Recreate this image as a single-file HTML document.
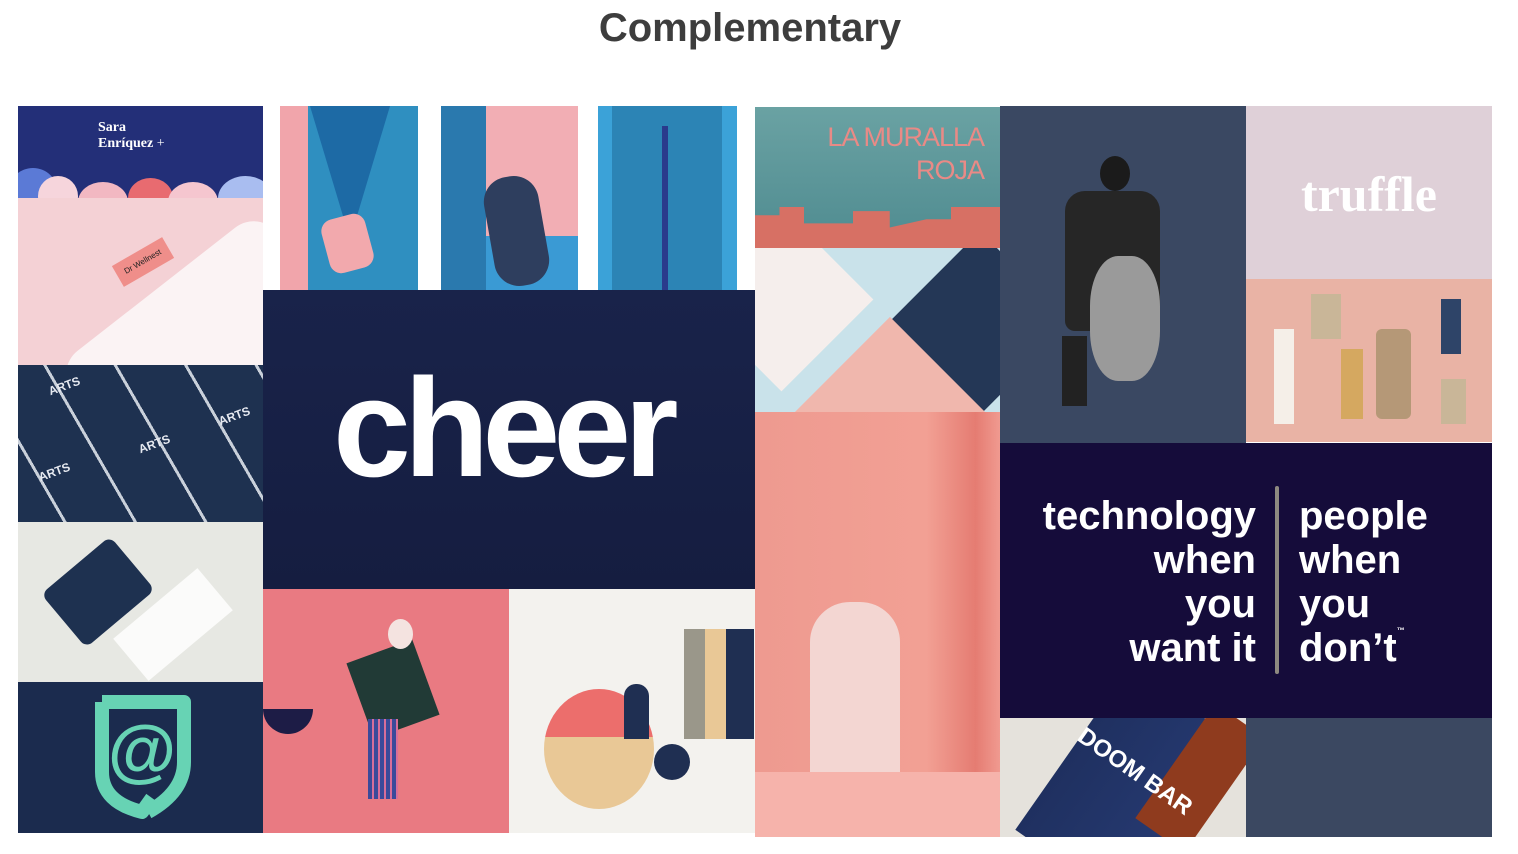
<!DOCTYPE html>
<html><head><meta charset="utf-8"><style>
*{margin:0;padding:0;box-sizing:border-box}
html,body{width:1518px;height:854px;overflow:hidden}
body{background:#fff;position:relative;font-family:"Liberation Sans",sans-serif}
.b{position:absolute;overflow:hidden}
h1{position:absolute;left:0;width:1500px;top:6px;text-align:center;font-size:40px;font-weight:bold;color:#3d3d3d;letter-spacing:0px}
.tech{position:absolute;color:#fff;font-size:40px;font-weight:bold;line-height:44px;letter-spacing:0px}
</style></head><body>
<h1>Complementary</h1>

<!-- column 1 -->
<div class="b" style="left:18px;top:106px;width:245px;height:92px;background:#232f78">
  <div style="position:absolute;left:80px;top:14px;color:#fff;font-family:'Liberation Serif',serif;font-weight:bold;font-size:14px;line-height:16px">Sara<br>Enríquez <span style="font-weight:normal">+</span></div>
  <div style="position:absolute;left:-10px;top:62px;width:50px;height:50px;border-radius:50%;background:#5b7ad6"></div>
  <div style="position:absolute;left:20px;top:70px;width:40px;height:40px;border-radius:50%;background:#f6d5dc"></div>
  <div style="position:absolute;left:60px;top:76px;width:50px;height:40px;border-radius:50%;background:#f2b8c2"></div>
  <div style="position:absolute;left:110px;top:72px;width:45px;height:40px;border-radius:50%;background:#e86b70"></div>
  <div style="position:absolute;left:150px;top:76px;width:50px;height:40px;border-radius:50%;background:#f5c6cf"></div>
  <div style="position:absolute;left:200px;top:70px;width:55px;height:45px;border-radius:50%;background:#a9bdf0"></div>
</div>
<div class="b" style="left:18px;top:198px;width:245px;height:167px;background:#f4d1d5">
  <div style="position:absolute;width:260px;height:200px;background:#fbf3f4;transform:rotate(-38deg);border-radius:30px;left:70px;top:70px"></div>
  <div style="position:absolute;left:96px;top:52px;width:58px;height:24px;background:#ef8e8a;transform:rotate(-30deg);font-size:8px;color:#222;text-align:center;line-height:24px">Dr Wellnest</div>
</div>
<div class="b" style="left:18px;top:365px;width:245px;height:157px;background:#1e3150">
  <div style="position:absolute;left:-20px;top:0;width:300px;height:160px;background:repeating-linear-gradient(60deg,transparent 0 58px,#c9d0da 58px 61px)"></div>
  <div style="position:absolute;left:20px;top:100px;color:#e6e9f0;font-weight:bold;font-size:12px;transform:rotate(-20deg)">ARTS</div>
  <div style="position:absolute;left:120px;top:72px;color:#e6e9f0;font-weight:bold;font-size:12px;transform:rotate(-20deg)">ARTS</div>
  <div style="position:absolute;left:200px;top:44px;color:#e6e9f0;font-weight:bold;font-size:12px;transform:rotate(-20deg)">ARTS</div>
  <div style="position:absolute;left:30px;top:14px;color:#e6e9f0;font-weight:bold;font-size:12px;transform:rotate(-20deg)">ARTS</div>
</div>
<div class="b" style="left:18px;top:522px;width:245px;height:160px;background:#e7e8e3">
  <div style="position:absolute;left:35px;top:35px;width:90px;height:70px;background:#1e3150;transform:rotate(-40deg);border-radius:8px"></div>
  <div style="position:absolute;left:100px;top:75px;width:110px;height:55px;background:#fbfbfa;transform:rotate(-40deg)"></div>
</div>
<div class="b" style="left:18px;top:682px;width:245px;height:151px;background:#1b2b4e">
  <svg width="245" height="151" style="position:absolute;left:0;top:0"><path d="M84 20 h82 v60 q0 30 -36 50 M84 20 v70 q0 30 40 40 l10 -14" fill="none" stroke="#67d3b4" stroke-width="14" stroke-linejoin="round"/><text x="124" y="92" text-anchor="middle" font-family="Liberation Sans" font-weight="bold" font-size="70" fill="#67d3b4">@</text></svg>
</div>

<!-- suits -->
<div class="b" style="left:280px;top:106px;width:138px;height:184px;background:#2f8fc0">
  <div style="position:absolute;left:0;top:0;width:28px;height:184px;background:#f1a5ab"></div>
  <div style="position:absolute;left:30px;top:0;width:80px;height:120px;background:#1d6aa5;clip-path:polygon(0 0,100% 0,55% 100%,45% 100%)"></div>
  <div style="position:absolute;left:45px;top:110px;width:45px;height:55px;background:#f2a9ad;border-radius:12px;transform:rotate(-15deg)"></div>
</div>
<div class="b" style="left:441px;top:106px;width:137px;height:184px;background:#f2aeb4">
  <div style="position:absolute;left:0;top:130px;width:137px;height:54px;background:#3a9ad4"></div>
  <div style="position:absolute;left:0;top:0;width:45px;height:184px;background:#2a79ae"></div>
  <div style="position:absolute;left:48px;top:70px;width:55px;height:110px;background:#2e3e5e;border-radius:25px;transform:rotate(-10deg)"></div>
</div>
<div class="b" style="left:598px;top:106px;width:139px;height:184px;background:#3ba2d8">
  <div style="position:absolute;left:14px;top:0;width:110px;height:184px;background:#2c84b5"></div>
  <div style="position:absolute;left:64px;top:20px;width:6px;height:164px;background:#2a3a8c"></div>
</div>

<!-- cheer -->
<div class="b" style="left:263px;top:290px;width:492px;height:299px;background:linear-gradient(#19234a,#151d40)">
  <div style="position:absolute;left:70px;top:58px;color:#fff;font-weight:bold;font-size:140px;letter-spacing:-7px;line-height:160px">cheer</div>
</div>

<!-- illustrations -->
<div class="b" style="left:263px;top:589px;width:246px;height:244px;background:#e97a82">
  <div style="position:absolute;left:95px;top:60px;width:70px;height:80px;background:#213a36;transform:rotate(-20deg)"></div>
  <div style="position:absolute;left:105px;top:130px;width:30px;height:80px;background:repeating-linear-gradient(90deg,#3b4a9a 0 4px,#d86e9a 4px 6px)"></div>
  <div style="position:absolute;left:125px;top:30px;width:25px;height:30px;background:#f4e3e0;border-radius:50%"></div>
  <div style="position:absolute;left:0;top:120px;width:50px;height:25px;border-radius:0 0 30px 30px;background:#1d1c46"></div>
</div>
<div class="b" style="left:509px;top:589px;width:246px;height:244px;background:#f3f2ee">
  <div style="position:absolute;left:35px;top:100px;width:110px;height:120px;border-radius:50%;background:linear-gradient(#ec6e6c 0 40%,#e9c896 40%)"></div>
  <div style="position:absolute;left:145px;top:155px;width:36px;height:36px;border-radius:50%;background:#1f2f52"></div>
  <div style="position:absolute;left:175px;top:40px;width:70px;height:110px;background:linear-gradient(90deg,#9a978a 0 30%,#e9c896 30% 60%,#1f2f52 60%)"></div>
  <div style="position:absolute;left:115px;top:95px;width:25px;height:55px;background:#1f2f52;border-radius:12px 12px 0 0"></div>
</div>

<!-- col 3 -->
<div class="b" style="left:755px;top:107px;width:245px;height:141px;background:linear-gradient(#6aa2a3,#4f8b90)">
  <div style="position:absolute;right:16px;top:14px;color:#e98a86;font-size:27px;line-height:33px;text-align:right;letter-spacing:-1px">LA MURALLA<br>ROJA</div>
  <div style="position:absolute;left:0;top:100px;width:245px;height:41px;background:#d77064;clip-path:polygon(0 20%,10% 20%,10% 0,20% 0,20% 40%,40% 40%,40% 10%,55% 10%,55% 50%,70% 30%,80% 30%,80% 0,100% 0,100% 100%,0 100%)"></div>
</div>
<div class="b" style="left:755px;top:248px;width:245px;height:164px;background:#c9e2ea">
  <div style="position:absolute;left:-30px;top:-10px;width:120px;height:130px;background:#f5eeec;transform:rotate(45deg)"></div>
  <div style="position:absolute;width:130px;height:130px;background:#243756;transform:rotate(45deg);left:160px;top:10px"></div>
  <div style="position:absolute;left:60px;top:100px;width:150px;height:150px;background:#f0b7ad;transform:rotate(45deg)"></div>
</div>
<div class="b" style="left:755px;top:412px;width:245px;height:425px;background:linear-gradient(90deg,#ee9a90,#f2a094 70%,#e57c72 90%,#f09a90)">
  <div style="position:absolute;left:55px;top:190px;width:90px;height:200px;background:#f3d6d2;border-radius:40px 40px 10px 10px"></div>
  <div style="position:absolute;left:0;top:360px;width:245px;height:65px;background:#f6b3ab"></div>
</div>

<!-- col 4 -->
<div class="b" style="left:1000px;top:106px;width:246px;height:337px;background:#3a4862">
  <div style="position:absolute;left:100px;top:50px;width:30px;height:35px;border-radius:50%;background:#1b1b1b"></div>
  <div style="position:absolute;left:65px;top:85px;width:95px;height:140px;background:#262626;border-radius:20px 20px 10px 10px"></div>
  <div style="position:absolute;left:90px;top:150px;width:70px;height:125px;background:#9a9a9a;border-radius:40%"></div>
  <div style="position:absolute;left:62px;top:230px;width:25px;height:70px;background:#222"></div>
</div>
<div class="b" style="left:1246px;top:106px;width:246px;height:173px;background:#dfd0d8">
  <div style="position:absolute;left:0;width:246px;top:58px;text-align:center;color:#fff;font-family:'Liberation Serif',serif;font-weight:bold;font-size:50px;line-height:60px">truffle</div>
</div>
<div class="b" style="left:1246px;top:279px;width:246px;height:163px;background:#e9b3a5">
  <div style="position:absolute;left:28px;top:50px;width:20px;height:95px;background:#f5efe8"></div>
  <div style="position:absolute;left:65px;top:15px;width:30px;height:45px;background:#c9b698"></div>
  <div style="position:absolute;left:95px;top:70px;width:22px;height:70px;background:#d5a860"></div>
  <div style="position:absolute;left:130px;top:50px;width:35px;height:90px;background:#b59877;border-radius:6px"></div>
  <div style="position:absolute;left:195px;top:100px;width:25px;height:45px;background:#c9b698"></div>
  <div style="position:absolute;left:195px;top:20px;width:20px;height:55px;background:#2e4468"></div>
</div>
<div class="b" style="left:1000px;top:443px;width:492px;height:275px;background:#150c3a">
  <div class="tech" style="left:0;width:256px;top:51px;text-align:right">technology<br>when<br>you<br>want it</div>
  <div style="position:absolute;left:275px;top:43px;width:4px;height:188px;background:#8e8a80;border-radius:2px"></div>
  <div class="tech" style="left:299px;top:51px">people<br>when<br>you<br>don’t<span style="font-size:8px;vertical-align:top;line-height:10px">™</span></div>
</div>

<div class="b" style="left:1000px;top:718px;width:246px;height:119px;background:#e5e2dc">
  <div style="position:absolute;top:-30px;width:140px;height:200px;background:linear-gradient(90deg,#1f3060,#263a72);transform:rotate(35deg);left:60px"></div>
  <div style="position:absolute;left:170px;top:-10px;width:60px;height:140px;background:#8f3b1e;transform:rotate(35deg)"></div>
  <div style="position:absolute;left:68px;top:40px;color:#fff;font-weight:bold;font-size:24px;transform:rotate(35deg)">DOOM BAR</div>
</div>
<div class="b" style="left:1246px;top:718px;width:246px;height:119px;background:#3b4861"></div>
</body></html>
